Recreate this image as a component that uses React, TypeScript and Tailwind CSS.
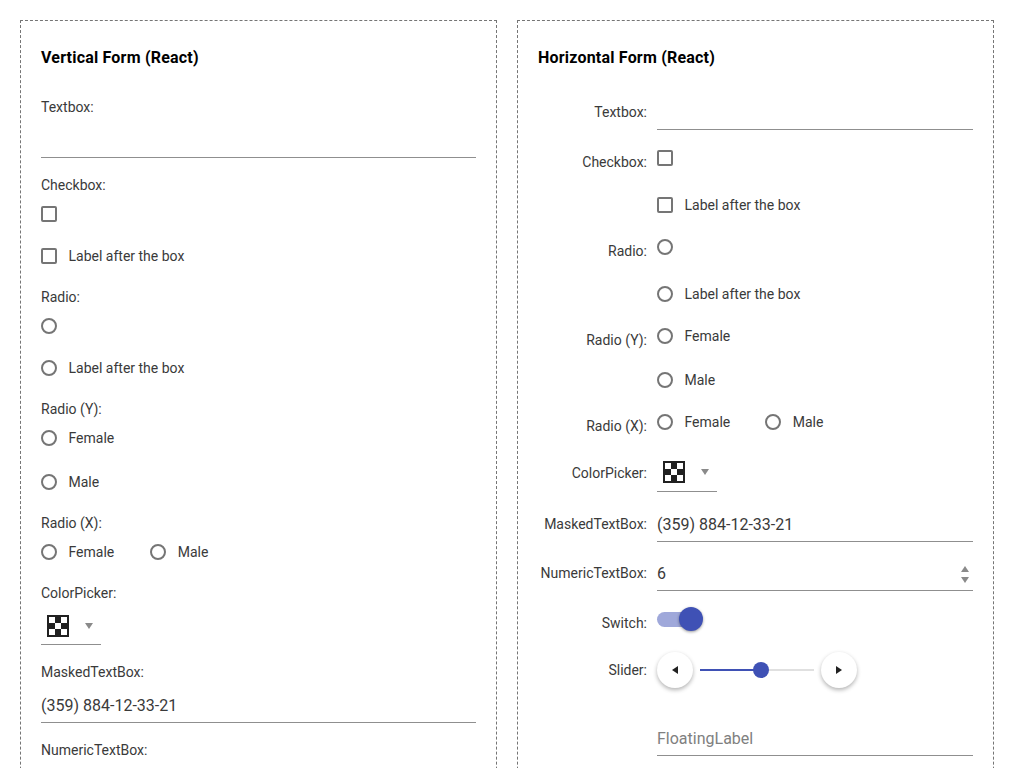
import React from "react";

const Box = () => <span className="block w-4 h-4 shrink-0 border-2 border-[#757575] rounded-[2px]" />;
const Dot = () => <span className="block w-4 h-4 shrink-0 border-2 border-[#757575] rounded-full" />;

const Check = ({ radio, text, short, className = "" }: { radio?: boolean; text?: string; short?: boolean; className?: string }) => (
  <div className={"flex items-center " + (short ? "h-[38px] " : "h-[42px] ") + className}>
    {radio ? <Dot /> : <Box />}
    {text && <span className="ml-[11.5px]">{text}</span>}
  </div>
);

const Label = ({ children, className = "" }: { children: React.ReactNode; className?: string }) => (
  <div className={"h-5 leading-5 " + className}>{children}</div>
);

const Swatch = () => (
  <svg width="22" height="22" viewBox="0 0 22 22" className="block">
    <rect width="22" height="22" fill="#212121" />
    <rect x="2" y="2" width="6" height="6" fill="#fff" />
    <rect x="14" y="2" width="6" height="6" fill="#fff" />
    <rect x="8" y="8" width="6" height="6" fill="#fff" />
    <rect x="2" y="14" width="6" height="6" fill="#fff" />
    <rect x="14" y="14" width="6" height="6" fill="#fff" />
  </svg>
);

const Tri = ({ className = "" }: { className?: string }) => (
  <svg width="8" height="6" viewBox="0 0 8 6" className={"block " + className}>
    <path d="M0 0h8L4 6z" fill="#8a8a8a" />
  </svg>
);

const ColorPicker = ({ className = "" }: { className?: string }) => (
  <div className={"w-[60px] border-b border-[#8f8f8f] flex items-center pl-1.5 " + className}>
    <Swatch />
    <Tri className="ml-4" />
  </div>
);

const Field = ({ value, placeholder, spin }: { value?: string; placeholder?: string; spin?: boolean }) => (
  <div className="border-b border-[#8f8f8f] h-[41px] pt-2 flex items-center text-base">
    {value && <span className="text-[#3a3a3a]">{value}</span>}
    {placeholder && <span className="text-[#808080]">{placeholder}</span>}
    {spin && (
      <div className="ml-auto mr-1 flex flex-col gap-[5px]">
        <Tri className="rotate-180" />
        <Tri />
      </div>
    )}
  </div>
);

const Panel = ({ title, children }: { title: string; children: React.ReactNode }) => (
  <section className="w-[477px] h-[900px] shrink-0 border border-dashed border-[#757575] px-5 pt-6">
    <h2 className="text-base leading-6 pt-px -mb-px font-bold tracking-[0.2px] text-black">{title}</h2>
    {children}
  </section>
);

const Row = ({ label, labelTop = 15, children, className = "" }: { label: string; labelTop?: number; children: React.ReactNode; className?: string }) => (
  <div className={"flex gap-[10px] " + className}>
    <div className="w-[109px] shrink-0 text-right h-5 leading-5" style={{ marginTop: labelTop }}>{label}</div>
    <div className="flex-1 min-w-0">{children}</div>
  </div>
);

const RoundBtn = ({ right }: { right?: boolean }) => (
  <div className="w-9 h-9 rounded-full bg-white shadow-[0_2px_4px_rgba(0,0,0,0.3)] flex items-center justify-center shrink-0">
    <svg width="6" height="8" viewBox="0 0 6 8" className="block">
      <path d={right ? "M0 0l6 4-6 4z" : "M6 0L0 4l6 4z"} fill="#212121" />
    </svg>
  </div>
);

export default function App() {
  return (
    <div className="h-screen overflow-hidden bg-white flex gap-5 pl-5 pt-5 text-sm text-[#3a3a3a] font-['Roboto',sans-serif]">
      <Panel title="Vertical Form (React)">
        <Label className="mt-7">Textbox:</Label>
        <Field />
        <Label className="mt-[17px]">Checkbox:</Label>
        <Check short />
        <Check className="mt-0.5" text="Label after the box" />
        <Label className="mt-2.5">Radio:</Label>
        <Check radio short />
        <Check radio className="mt-0.5" text="Label after the box" />
        <Label className="mt-2.5">Radio (Y):</Label>
        <Check radio short text="Female" />
        <Check radio className="mt-1" text="Male" />
        <Label className="mt-2.5">Radio (X):</Label>
        <div className="flex gap-9">
          <Check radio short text="Female" />
          <Check radio short text="Male" />
        </div>
        <Label className="mt-3">ColorPicker:</Label>
        <ColorPicker className="h-[42px] pt-1" />
        <Label className="mt-[17px]">MaskedTextBox:</Label>
        <Field value="(359) 884-12-33-21" />
        <Label className="mt-[17px]">NumericTextBox:</Label>
        <Field value="6" spin />
      </Panel>
      <Panel title="Horizontal Form (React)">
        <Row label="Textbox:" labelTop={13} className="mt-5">
          <Field />
        </Row>
        <Row label="Checkbox:" className="mt-[7px]">
          <Check />
          <Check className="mt-[5px]" text="Label after the box" />
        </Row>
        <Row label="Radio:">
          <Check radio />
          <Check radio className="mt-[5px]" text="Label after the box" />
        </Row>
        <Row label="Radio (Y):">
          <Check radio text="Female" />
          <Check radio className="mt-0.5" text="Male" />
        </Row>
        <Row label="Radio (X):">
          <div className="flex gap-[35px]">
            <Check radio text="Female" />
            <Check radio text="Male" />
          </div>
        </Row>
        <Row label="ColorPicker:" labelTop={11} className="mt-[9px]">
          <ColorPicker className="h-10" />
        </Row>
        <Row label="MaskedTextBox:" labelTop={13} className="mt-[9px]">
          <Field value="(359) 884-12-33-21" />
        </Row>
        <Row label="NumericTextBox:" labelTop={13} className="mt-2">
          <Field value="6" spin />
        </Row>
        <Row label="Switch:" labelTop={13} className="mt-[9px]">
          <div className="h-[38px] flex items-center">
            <div className="relative w-10 h-[15px] rounded-full bg-[#9fa8da]">
              <span className="absolute left-[22px] -top-[5px] w-6 h-6 rounded-full bg-[#3f51b5] shadow-[0_1px_3px_rgba(0,0,0,0.4)]" />
            </div>
          </div>
        </Row>
        <Row label="Slider:" labelTop={8} className="mt-[14px]">
          <div className="flex items-center gap-[7px] h-9">
            <RoundBtn />
            <div className="relative w-[114px] h-0.5 bg-[#e0e0e0]">
              <div className="h-full w-[61px] bg-[#3f51b5]" />
              <span className="absolute left-[53px] -top-[7px] w-4 h-4 rounded-full bg-[#3f51b5]" />
            </div>
            <RoundBtn right />
          </div>
        </Row>
        <Row label="" labelTop={0} className="mt-[27px]">
          <Field placeholder="FloatingLabel" />
        </Row>
      </Panel>
    </div>
  );
}
